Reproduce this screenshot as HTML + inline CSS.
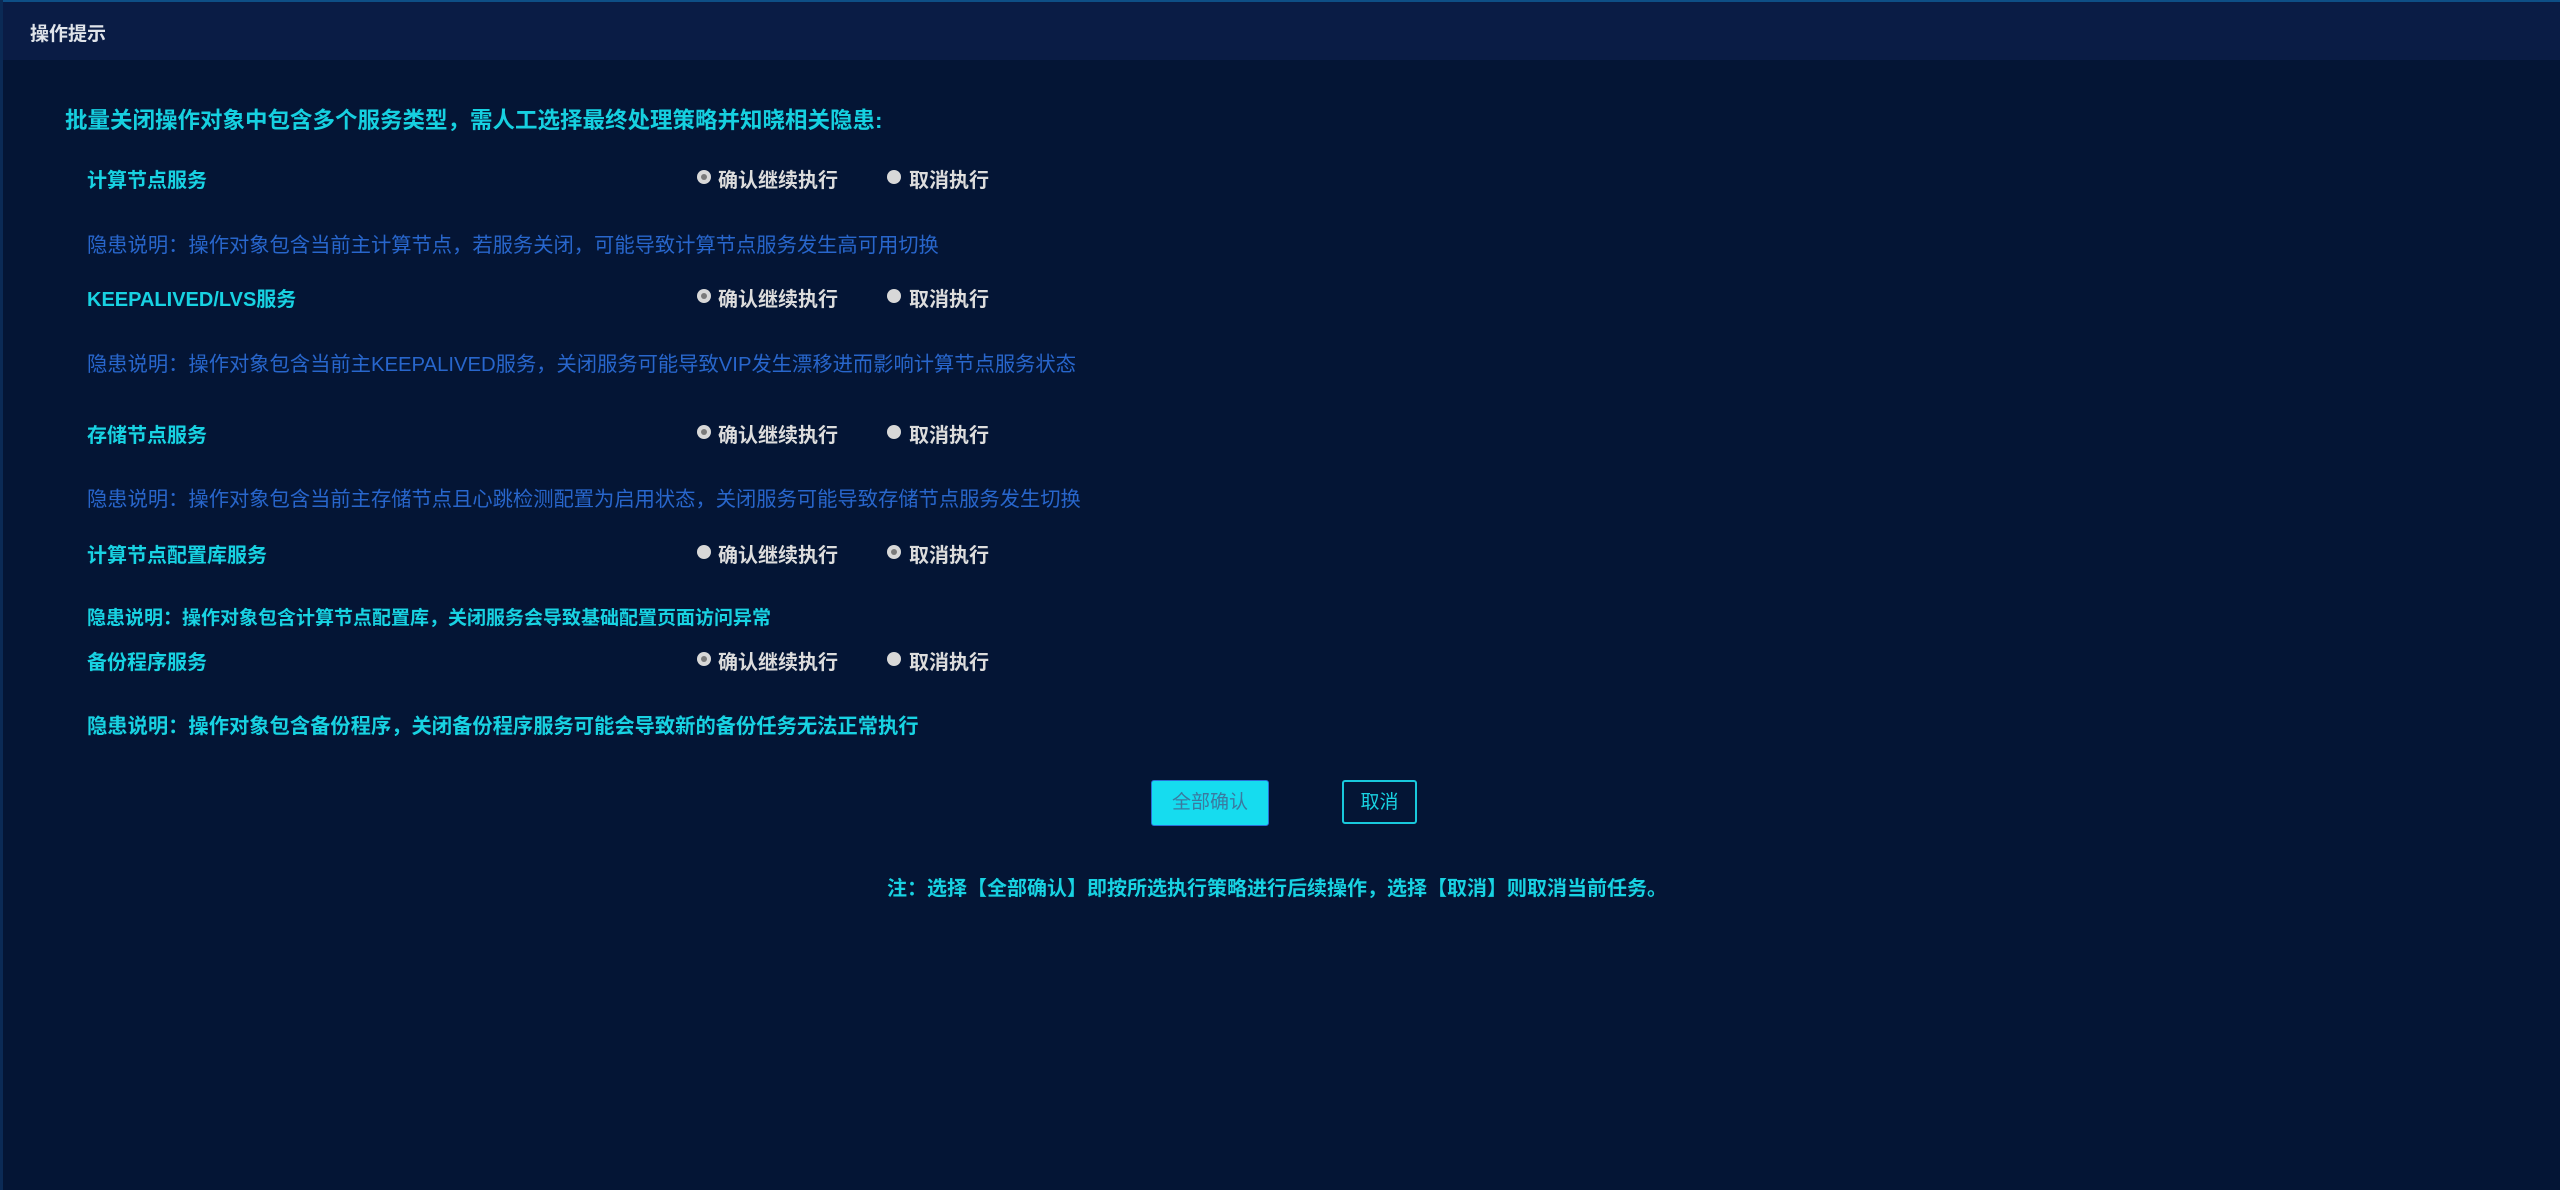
<!DOCTYPE html>
<html><head><meta charset="utf-8"><style>
html,body{margin:0;padding:0}
body{width:2560px;height:1190px;background:#041535;font-family:"Liberation Sans","Noto Sans CJK SC",sans-serif;position:relative;overflow:hidden}
.top{position:absolute;left:0;top:0;width:2560px;height:2px;background:#0e4f86}
.left{position:absolute;left:0;top:0;width:3px;height:1190px;background:#0b2a55}
.hdr{position:absolute;left:3px;top:2px;width:2557px;height:58px;background:#0a1c45}
.hdr span{position:absolute;left:27px;top:17px;font-size:19px;color:#e0e4ea;font-weight:bold}
.t{position:absolute;white-space:nowrap;font-weight:bold}
.h{left:65px;top:103px;font-size:22.5px;color:#16d0e0}
.lab{left:87px;font-size:20px;color:#18d2e2}
.hint{left:87px;font-size:20.3px;color:#2866cc;font-weight:normal}
.hint2{left:87px;font-size:20.3px;color:#18d2e2}
.r{font-size:20px;color:#dcdcdc}
.dot{position:absolute;width:14px;height:14px;border-radius:50%;background:#d8d8d8}
.dot.on::after{content:"";position:absolute;left:4px;top:4px;width:6px;height:6px;border-radius:50%;background:#7a7a7a}
.btn1{position:absolute;left:1151px;top:780px;width:116px;height:44px;background:#16dcef;border:1px solid #2a6fd6;border-radius:3px;color:#3a7aa0;font-size:19px;text-align:center;line-height:44px}
.btn2{position:absolute;left:1342px;top:780px;width:75px;height:44px;border:2px solid #18c8dc;border-radius:3px;color:#18d2e2;font-size:19px;text-align:center;line-height:42px;box-sizing:border-box}
.note{left:887px;top:872px;font-size:20px;color:#18d2e2}
</style></head><body>
<div class="top"></div><div class="left"></div>
<div class="hdr"><span>操作提示</span></div>
<div class="t h">批量关闭操作对象中包含多个服务类型，需人工选择最终处理策略并知晓相关隐患:</div>

<div class="t lab" style="top:164px">计算节点服务</div>
<div class="dot on" style="left:697px;top:170px"></div><div class="t r" style="left:718px;top:164px">确认继续执行</div>
<div class="dot" style="left:887px;top:170px"></div><div class="t r" style="left:909px;top:164px">取消执行</div>
<div class="t hint" style="top:228px">隐患说明：操作对象包含当前主计算节点，若服务关闭，可能导致计算节点服务发生高可用切换</div>

<div class="t lab" style="top:283px">KEEPALIVED/LVS服务</div>
<div class="dot on" style="left:697px;top:289px"></div><div class="t r" style="left:718px;top:283px">确认继续执行</div>
<div class="dot" style="left:887px;top:289px"></div><div class="t r" style="left:909px;top:283px">取消执行</div>
<div class="t hint" style="top:347px">隐患说明：操作对象包含当前主KEEPALIVED服务，关闭服务可能导致VIP发生漂移进而影响计算节点服务状态</div>

<div class="t lab" style="top:419px">存储节点服务</div>
<div class="dot on" style="left:697px;top:425px"></div><div class="t r" style="left:718px;top:419px">确认继续执行</div>
<div class="dot" style="left:887px;top:425px"></div><div class="t r" style="left:909px;top:419px">取消执行</div>
<div class="t hint" style="top:482px">隐患说明：操作对象包含当前主存储节点且心跳检测配置为启用状态，关闭服务可能导致存储节点服务发生切换</div>

<div class="t lab" style="top:539px">计算节点配置库服务</div>
<div class="dot" style="left:697px;top:545px"></div><div class="t r" style="left:718px;top:539px">确认继续执行</div>
<div class="dot on" style="left:887px;top:545px"></div><div class="t r" style="left:909px;top:539px">取消执行</div>
<div class="t hint2" style="top:603px;font-size:19px">隐患说明：操作对象包含计算节点配置库，关闭服务会导致基础配置页面访问异常</div>

<div class="t lab" style="top:646px">备份程序服务</div>
<div class="dot on" style="left:697px;top:652px"></div><div class="t r" style="left:718px;top:646px">确认继续执行</div>
<div class="dot" style="left:887px;top:652px"></div><div class="t r" style="left:909px;top:646px">取消执行</div>
<div class="t hint2" style="top:709px">隐患说明：操作对象包含备份程序，关闭备份程序服务可能会导致新的备份任务无法正常执行</div>

<div class="btn1">全部确认</div>
<div class="btn2">取消</div>
<div class="t note">注：选择【全部确认】即按所选执行策略进行后续操作，选择【取消】则取消当前任务。</div>
</body></html>
